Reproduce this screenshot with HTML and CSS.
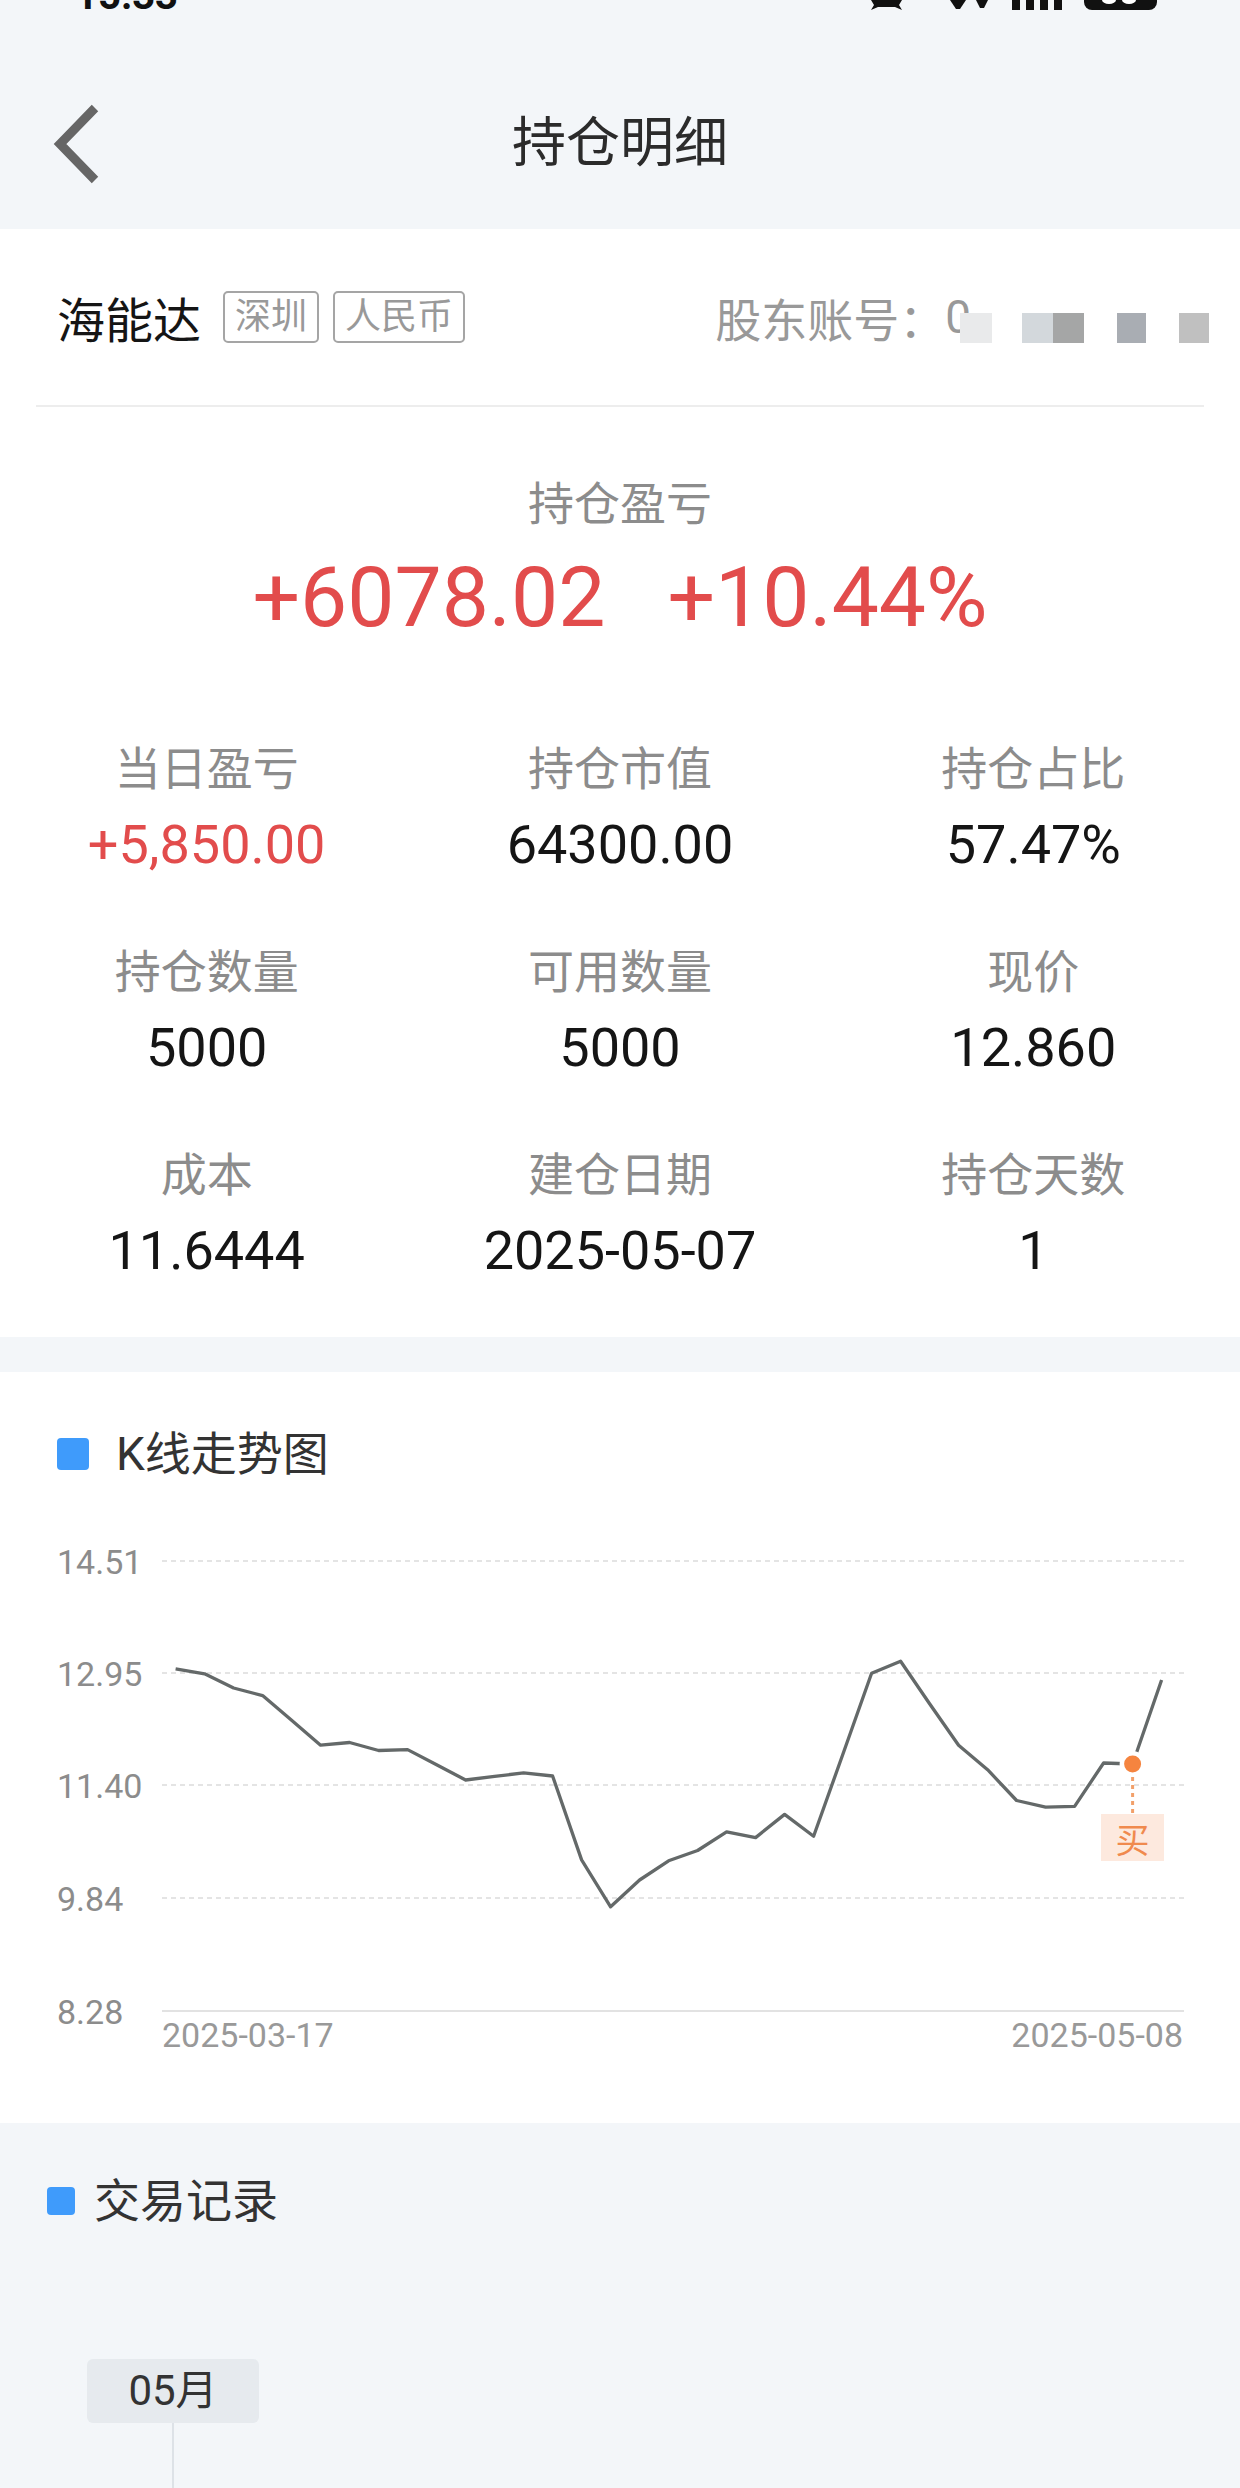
FILE: index.html
```html
<!DOCTYPE html>
<html lang="zh-CN">
<head>
  <meta charset="UTF-8" />
  <meta name="viewport" content="width=device-width, initial-scale=1" />
  <title>持仓明细</title>
  <link rel="stylesheet" href="styles.css">
</head>
<body>
  <div class="page">
    <div class="status-bar">
      <span class="status-time">15:33</span>
      <svg class="status-icons" width="290" height="10" viewBox="0 0 290 10">
        <path d="M1 0 H32 L29 5 L32 10 L25 7 H8 L1 10 L4 5 Z" fill="#111" />
        <polygon points="80,0 96,0 90,9 86,9" fill="#111" />
        <polygon points="106,0 118,0 114,8 110,8" fill="#111" />
        <rect x="142" y="0" width="8" height="10" fill="#111" />
        <rect x="156" y="0" width="8" height="10" fill="#111" />
        <rect x="170" y="0" width="8" height="10" fill="#111" />
        <rect x="184" y="0" width="8" height="10" fill="#111" />
        <rect x="214" y="-12" width="73" height="22" rx="8" fill="#111" />
        <ellipse cx="239" cy="0" rx="7" ry="4" fill="#fff" />
        <ellipse cx="259" cy="0" rx="7" ry="4" fill="#fff" />
      </svg>
    </div>

    <header class="nav-bar">
      <div class="back-btn">
        <svg width="56" height="84" viewBox="0 0 56 84">
          <path d="M45 6 L10 42 L45 78" fill="none" stroke="#666" stroke-width="9" />
        </svg>
      </div>
      <div class="nav-title">持仓明细</div>
      <div></div>
    </header>

    <section class="summary">
      <div class="stock-head">
        <span class="stock-name">海能达</span>
        <span class="tag">深圳</span>
        <span class="tag">人民币</span>
        <div class="account">
          <span>股东账号：</span><span class="acct-no">0</span>
          <span class="mosaic">
            <i class="m1"></i><i class="m2"></i><i class="m3"></i><i class="m4"></i><i class="m5"></i>
          </span>
        </div>
      </div>

      <div class="pl-block">
        <div class="pl-label">持仓盈亏</div>
        <div class="pl-values">
          <span>+6078.02</span>
          <span>+10.44%</span>
        </div>
      </div>

      <div class="stats">
        <div class="stat">
          <div class="stat-label">当日盈亏</div>
          <div class="stat-value up">+5,850.00</div>
        </div>
        <div class="stat">
          <div class="stat-label">持仓市值</div>
          <div class="stat-value">64300.00</div>
        </div>
        <div class="stat">
          <div class="stat-label">持仓占比</div>
          <div class="stat-value">57.47%</div>
        </div>
        <div class="stat">
          <div class="stat-label">持仓数量</div>
          <div class="stat-value">5000</div>
        </div>
        <div class="stat">
          <div class="stat-label">可用数量</div>
          <div class="stat-value">5000</div>
        </div>
        <div class="stat">
          <div class="stat-label">现价</div>
          <div class="stat-value">12.860</div>
        </div>
        <div class="stat">
          <div class="stat-label">成本</div>
          <div class="stat-value">11.6444</div>
        </div>
        <div class="stat">
          <div class="stat-label">建仓日期</div>
          <div class="stat-value">2025-05-07</div>
        </div>
        <div class="stat">
          <div class="stat-label">持仓天数</div>
          <div class="stat-value">1</div>
        </div>
      </div>
    </section>

    <section class="chart-card">
      <div class="section-title">
        <span class="title-mark"></span>
        <span>K线走势图</span>
      </div>
      <!-- chart drawn in page coordinates -->
      <svg class="chart" width="1240" height="639" viewBox="0 1484 1240 639">
        <g class="grid">
          <line x1="162" y1="1561" x2="1184" y2="1561" />
          <line x1="162" y1="1673" x2="1184" y2="1673" />
          <line x1="162" y1="1785" x2="1184" y2="1785" />
          <line x1="162" y1="1898" x2="1184" y2="1898" />
        </g>
        <line class="axis" x1="162" y1="2011" x2="1184" y2="2011" />
        <g class="y-labels">
          <text x="57" y="1562">14.51</text>
          <text x="57" y="1674">12.95</text>
          <text x="57" y="1786">11.40</text>
          <text x="57" y="1899">9.84</text>
          <text x="57" y="2012">8.28</text>
        </g>
        <text class="x-label" x="162" y="2047">2025-03-17</text>
        <text class="x-label" x="1183" y="2047" text-anchor="end">2025-05-08</text>
        <polyline class="price-line" points="175.6,1668.8 204.6,1673.8 233.6,1688 262.6,1695.6 291.6,1720.2 320.6,1745.2 349.6,1742.5 378.6,1750.5 407.6,1749.6 436.6,1764.8 465.6,1780 494.6,1776.4 523.6,1772.9 552.6,1776 581.6,1859.9 610.6,1906.8 639.6,1880 668.6,1860.8 697.6,1850.5 726.6,1831.8 755.6,1837.6 784.6,1814.4 813.6,1836.2 842.6,1755 871.6,1673.3 900.6,1661.3 929.6,1703.7 958.6,1745.2 987.6,1769.7 1016.6,1800.5 1045.6,1807.2 1074.6,1806.3 1103.6,1763 1132.6,1764 1161.6,1680" />
        <line class="buy-dash" x1="1132.6" y1="1777" x2="1132.6" y2="1813" />
        <circle cx="1132.6" cy="1764" r="13" fill="#fff" />
        <circle cx="1132.6" cy="1764" r="8.5" fill="#f5843f" />
        <rect x="1101" y="1814" width="63" height="47" fill="#fde9de" />
        <text class="buy-text" x="1132.6" y="1838">买</text>
      </svg>
    </section>

    <section class="records">
      <div class="section-title">
        <span class="title-mark"></span>
        <span>交易记录</span>
      </div>
      <div class="month-pill">05月</div>
      <div class="timeline-line"></div>
    </section>
  </div>
</body>
</html>
```

FILE: styles.css
```css
/* General */
body {
  margin: 0;
  background-color: #f3f6f9;
  font-family: Roboto, "Noto Sans CJK SC", sans-serif;
  color: #333;
}
.page {
  width: 1240px;
}

/* Status bar (mostly cut off) */
.status-bar {
  height: 10px;
  overflow: hidden;
  display: flex;
  justify-content: space-between;
  align-items: flex-start;
  padding: 0 80px 0 75px;
}
.status-time {
  font-size: 40px;
  font-weight: 700;
  line-height: 40px;
  margin-top: -24px;
  color: #111;
}
.status-icons {
  display: block;
}

/* Nav bar */
.nav-bar {
  height: 219px;
  box-sizing: border-box;
  padding-top: 48px;
  display: grid;
  grid-template-columns: 1fr auto 1fr;
  align-items: center;
}
.back-btn {
  padding-left: 50px;
  display: flex;
}
.nav-title {
  font-size: 54px;
  line-height: 70px;
  color: #2b2b2b;
}

/* Summary card */
.summary {
  background-color: #fff;
}
.stock-head {
  height: 176px;
  margin: 0 36px;
  padding-left: 21px;
  border-bottom: 2px solid #ededed;
  display: flex;
  align-items: center;
}
.stock-name {
  font-size: 48px;
  color: #151515;
  margin-right: 22px;
}
.tag {
  font-size: 36px;
  line-height: 48px;
  color: #999;
  border: 2px solid #a5a5a5;
  border-radius: 5px;
  padding: 0 10px;
  margin-right: 14px;
}
.account {
  margin-left: auto;
  margin-right: -5px;
  display: flex;
  align-items: center;
  font-size: 46px;
  color: #999;
}
.mosaic {
  display: flex;
  margin-left: -11px;
  margin-top: 22px;
}
.mosaic i {
  display: block;
  height: 30px;
}
.mosaic .m1 { width: 32px; background-color: #e9eaeb; }
.mosaic .m2 { width: 31px; background-color: #d3d8dc; margin-left: 30px; }
.mosaic .m3 { width: 31px; background-color: #a5a6a6; }
.mosaic .m4 { width: 29px; background-color: #a9adb3; margin-left: 33px; }
.mosaic .m5 { width: 30px; background-color: #c0c0c0; margin-left: 33px; }

.pl-block {
  padding-top: 67px;
  text-align: center;
}
.pl-label {
  font-size: 46px;
  line-height: 60px;
  color: #8c8c8c;
}
.pl-values {
  margin-top: 14px;
  font-size: 84px;
  line-height: 100px;
  color: #e24c4c;
  display: flex;
  justify-content: center;
  gap: 62px;
}

.stats {
  margin-top: 91px;
  padding-bottom: 51px;
  display: grid;
  grid-template-columns: repeat(3, 1fr);
  row-gap: 62px;
  text-align: center;
}
.stat-label {
  font-size: 46px;
  line-height: 60px;
  color: #8c8c8c;
}
.stat-value {
  margin-top: 11px;
  font-size: 54px;
  line-height: 70px;
  color: #151515;
}
.stat-value.up {
  color: #e24c4c;
}

/* Section titles */
.section-title {
  display: flex;
  align-items: center;
  font-size: 46px;
  line-height: 60px;
  color: #333;
}
.title-mark {
  width: 32px;
  height: 32px;
  border-radius: 4px;
  background-color: #3f9bfb;
  margin-right: 27px;
}

/* Chart card */
.chart-card {
  margin-top: 35px;
  padding-top: 52px;
  background-color: #fff;
}
.chart-card .section-title {
  padding-left: 57px;
}
.chart {
  display: block;
}
.grid line {
  stroke: #dcdcdc;
  stroke-width: 1.5;
  stroke-dasharray: 5 4;
}
.axis {
  stroke: #e2e2e2;
  stroke-width: 2;
}
.y-labels text {
  font-family: Roboto, sans-serif;
  font-size: 34px;
  fill: #8c8c8c;
  dominant-baseline: central;
}
.x-label {
  font-family: Roboto, sans-serif;
  font-size: 34px;
  fill: #999;
}
.price-line {
  fill: none;
  stroke: #646969;
  stroke-width: 3.3;
  stroke-linejoin: round;
}
.buy-dash {
  stroke: #f2a06a;
  stroke-width: 3;
  stroke-dasharray: 4 4;
}
.buy-text {
  font-family: "Noto Sans CJK SC", sans-serif;
  font-size: 34px;
  fill: #f08a4e;
  text-anchor: middle;
  dominant-baseline: central;
}

/* Trade records */
.records {
  padding-top: 48px;
}
.records .section-title {
  padding-left: 47px;
}
.records .title-mark {
  width: 28px;
  height: 28px;
  margin-right: 19px;
}
.month-pill {
  margin: 128px 0 0 87px;
  width: 172px;
  height: 64px;
  border-radius: 6px;
  background-color: #e6eaee;
  font-size: 42px;
  line-height: 64px;
  text-align: center;
  color: #333;
}
.timeline-line {
  margin-left: 172px;
  width: 2px;
  height: 80px;
  background-color: #dde2e7;
}
```
